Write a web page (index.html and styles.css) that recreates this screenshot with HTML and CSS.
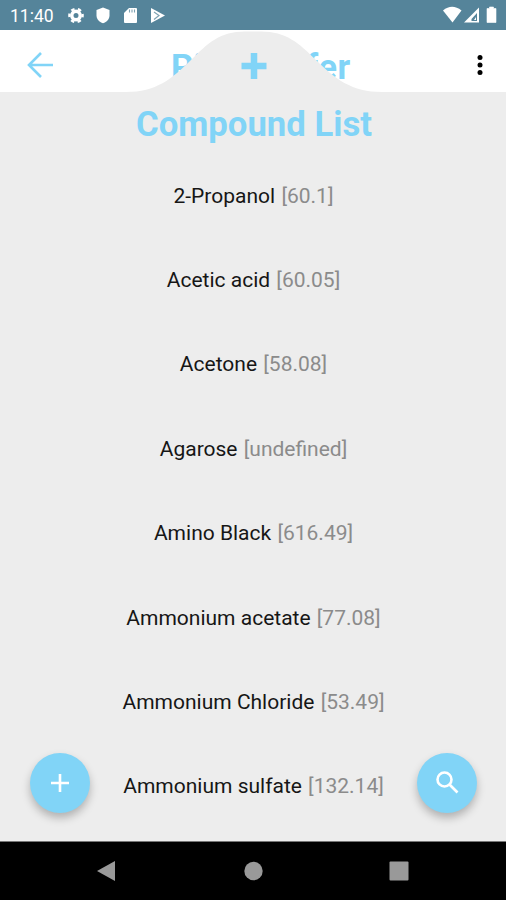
FILE: index.html
```
<!DOCTYPE html>
<html lang="en">

<head>
    <meta charset="UTF-8">
    <meta name="viewport" content="width=device-width, initial-scale=1.0">
    <title>Compound List</title>

    <link rel="stylesheet" href="styles.css">
</head>

<body>
    <div class="status-bar">
        <span class="time">11:40</span>
        <svg class="status-icons" width="102" height="30" viewBox="0 0 102 30">
            <!-- settings -->
            <g fill="none" stroke="#fff">
                <circle cx="12" cy="15.5" r="4.2" stroke-width="3.4" />
                <circle cx="12" cy="15.5" r="6.6" stroke-width="2.4" stroke-dasharray="3.5 3.41" stroke-dashoffset="1.75" />
            </g>
            <!-- shield -->
            <path d="M39 7.5l6.5 2.5v5.5c0 3.5-2.7 6.5-6.5 7.7-3.8-1.2-6.5-4.2-6.5-7.7V10z" fill="#fff" />
            <!-- sd card -->
            <path d="M65 8h7q1 0 1 1v13q0 1-1 1H61q-1 0-1-1v-9z" fill="#fff" />
            <path d="M65.5 9.500v3M68 9.500v3M70.500 9.500v3" stroke="#7fa3b3" stroke-width="1.1" />
            <!-- play store -->
            <path d="M87 8l14 7.5L87 23z" fill="#fff" />
            <path d="M90 12l5 3.5-5 4" fill="none" stroke="#7fa3b3" stroke-width="1.2" />
        </svg>
        <svg class="signal-icons" width="58" height="30" viewBox="0 0 58 30">
            <path d="M1 10.5Q10 3 19.5 10.5L10.5 22.500z" fill="#fff" />
            <path d="M22 22.500L37 7.500v15z" fill="#fff" />
            <path d="M29.500 19l5.500-6v8h-5.500z" fill="#55849a" />
            <path d="M32 20l2-3v3z" fill="#fff" />
            <path d="M45 8.500h2.500V7h4v1.500H54v14H45z" fill="#fff" stroke="#fff" stroke-width=".6" stroke-linejoin="round" />
        </svg>
    </div>

    <header class="toolbar">
        <svg class="back" width="30" height="30" viewBox="0 0 30 30">
            <path d="M28 15H4M16 3L4 15l12 12" />
        </svg>
        <h1>Pick Buffer</h1>
        <svg class="more" width="8" height="24" viewBox="0 0 8 24">
            <circle cx="4" cy="4.5" r="2.5" />
            <circle cx="4" cy="12" r="2.5" />
            <circle cx="4" cy="19.5" r="2.5" />
        </svg>
        <svg class="tab" width="256" height="62" viewBox="0 0 256 62">
            <path d="M0 62C30 62 46 49 65 30C82 13 94 1.5 119 1.5H135C160 1.5 173 13 190 30C209 49 226 62 256 62z" fill="#ededed" />
            <path d="M128 23v26M115.500 36h25" stroke="#81d4f7" stroke-width="6.5" />
        </svg>
    </header>

    <main>
        <h2>Compound List</h2>
        <ul>
            <li>2-Propanol&nbsp;<span>[60.1]</span></li>
            <li>Acetic acid&nbsp;<span>[60.05]</span></li>
            <li>Acetone&nbsp;<span>[58.08]</span></li>
            <li>Agarose&nbsp;<span>[undefined]</span></li>
            <li>Amino Black&nbsp;<span>[616.49]</span></li>
            <li>Ammonium acetate&nbsp;<span>[77.08]</span></li>
            <li>Ammonium Chloride&nbsp;<span>[53.49]</span></li>
            <li>Ammonium sulfate&nbsp;<span>[132.14]</span></li>
        </ul>
    </main>

    <button class="fab fab-add" aria-label="Add">
        <svg width="24" height="24" viewBox="0 0 24 24">
            <path d="M12 3v18M3 12h18" />
        </svg>
    </button>
    <button class="fab fab-search" aria-label="Search">
        <svg width="24" height="24" viewBox="0 0 24 24">
            <circle cx="9.5" cy="8.500" r="7" />
            <path d="M14.500 13.500l8 8" />
        </svg>
    </button>

    <nav class="nav-bar">
        <svg width="22" height="22" viewBox="0 0 22 22">
            <path d="M2 11L20 1v20z" />
        </svg>
        <svg width="22" height="22" viewBox="0 0 22 22">
            <circle cx="11.500" cy="11" r="9.2" />
        </svg>
        <svg width="22" height="22" viewBox="0 0 22 22">
            <rect x="1.5" y="1.5" width="19" height="19" rx="1" />
        </svg>
    </nav>
</body>

</html>
```
FILE: styles.css
```
body {
    font-family: Roboto, sans-serif;
    margin: 0;
    height: 900px;
    display: flex;
    flex-direction: column;
    position: relative;
    overflow: hidden;
    background-color: #ededed;
}

svg {
    display: block;
    flex: none;
}

.status-bar {
    display: flex;
    align-items: center;
    height: 30px;
    padding: 0 6px 0 10px;
    background-color: #55849a;
    color: #fff;
}

.time {
    width: 54px;
    font-size: 17.5px;
    line-height: 30px;
    padding-top: 1px;
}

.signal-icons {
    margin-left: auto;
}

.toolbar {
    display: flex;
    align-items: center;
    position: relative;
    height: 62px;
    padding: 0 22px 0 25px;
    background-color: #fff;
}

.back {
    margin-top: 7px;
    fill: none;
    stroke: #81d4f7;
    stroke-width: 2.6;
}

.more {
    margin-top: 7px;
    margin-left: auto;
}

h1,
h2 {
    margin: 0;
    font-size: 34.7px;
    line-height: 42px;
    font-weight: bold;
    text-align: center;
    color: #81d4f7;
}

h1 {
    padding-top: 12px;
    margin-left: 116px;
    letter-spacing: 0.5px;
}

.tab {
    position: absolute;
    left: 126px;
    top: 0;
}

main {
    flex: 1;
    min-height: 0;
    padding-top: 11px;
}

h2 {
    padding-left: 2px;
}

ul {
    list-style-type: none;
    margin: 0;
    padding: 8.5px 0 0;
}

li {
    display: flex;
    align-items: center;
    justify-content: center;
    height: 84.4px;
    padding-left: 1px;
    font-size: 21px;
    color: #161616;
}

li span {
    margin-left: 1px;
    color: #8b8b8b;
}

.fab {
    position: absolute;
    top: 753px;
    width: 60px;
    height: 60px;
    display: flex;
    align-items: center;
    justify-content: center;
    padding: 0;
    border: none;
    border-radius: 50%;
    background-color: #81d4f7;
    box-shadow: 0 5px 8px rgba(0, 0, 0, 0.25);
    cursor: pointer;
}

.fab svg {
    fill: none;
    stroke: #fff;
    stroke-width: 2.6;
}

.fab-add {
    left: 30px;
}

.fab-search {
    left: 417px;
}

.nav-bar {
    display: flex;
    align-items: center;
    justify-content: space-between;
    height: 59px;
    box-sizing: border-box;
    padding: 0 96px 0 95px;
    border-top: 1px solid #777;
    background-color: #000;
    fill: #999;
}
```
